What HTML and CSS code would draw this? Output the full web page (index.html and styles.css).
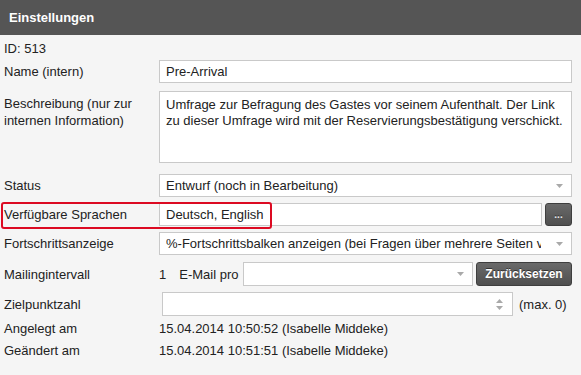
FILE: index.html
```html
<!DOCTYPE html>
<html lang="de">
<head>
    <meta charset="UTF-8">
    <meta name="viewport" content="width=device-width, initial-scale=1.0">
    <title>Einstellungen</title>
    <link rel="stylesheet" href="styles.css">
</head>
<body>

    <!-- Einstellungen Panel -->
    <div class="panel">
        <div class="panel-head">Einstellungen</div>

        <div class="panel-body">
            <div class="row row-id">ID: 513</div>

            <div class="row row-name">
                <label class="lbl">Name (intern)</label>
                <div class="fld">
                    <input class="txt" type="text" value="Pre-Arrival">
                </div>
            </div>

            <div class="row row-desc">
                <label class="lbl lbl-top">Beschreibung (nur zur internen Information)</label>
                <div class="fld">
                    <textarea class="area" readonly>Umfrage zur Befragung des Gastes vor seinem Aufenthalt. Der Link zu dieser Umfrage wird mit der Reservierungsbestätigung verschickt.</textarea>
                </div>
            </div>

            <div class="row row-status">
                <label class="lbl">Status</label>
                <div class="fld">
                    <div class="select">
                        <span class="select-val">Entwurf (noch in Bearbeitung)</span>
                        <svg class="caret" width="7" height="4" viewBox="0 0 7 4"><path d="M0 0H7L3.5 4Z"/></svg>
                    </div>
                </div>
            </div>

            <div class="row row-lang">
                <label class="lbl">Verfügbare Sprachen</label>
                <div class="fld fld-inline">
                    <input class="txt" type="text" value="Deutsch, English" readonly>
                    <button class="btn btn-more" type="button">...</button>
                </div>
                <!-- Markierung -->
                <span class="mark"></span>
            </div>

            <div class="row row-progress">
                <label class="lbl">Fortschrittsanzeige</label>
                <div class="fld">
                    <div class="select">
                        <span class="select-val">%-Fortschrittsbalken anzeigen (bei Fragen über mehrere Seiten verteilt)</span>
                        <svg class="caret" width="7" height="4" viewBox="0 0 7 4"><path d="M0 0H7L3.5 4Z"/></svg>
                    </div>
                </div>
            </div>

            <div class="row row-mail">
                <label class="lbl">Mailingintervall</label>
                <div class="fld fld-inline">
                    <span class="num">1</span>
                    <span class="unit">E-Mail pro</span>
                    <div class="select select-mail">
                        <span class="select-val"></span>
                        <svg class="caret" width="7" height="4" viewBox="0 0 7 4"><path d="M0 0H7L3.5 4Z"/></svg>
                    </div>
                    <button class="btn btn-reset" type="button">Zurücksetzen</button>
                </div>
            </div>

            <div class="row row-goal">
                <label class="lbl">Zielpunktzahl</label>
                <div class="fld fld-inline">
                    <div class="number">
                        <span class="number-val"></span>
                        <svg class="spin" width="7" height="11" viewBox="0 0 7 11"><path d="M0 4H7L3.5 0Z"/><path d="M0 7H7L3.5 11Z"/></svg>
                    </div>
                    <span class="hint">(max. 0)</span>
                </div>
            </div>

            <div class="row row-date">
                <span class="lbl">Angelegt am</span>
                <span class="val">15.04.2014 10:50:52 (Isabelle Middeke)</span>
            </div>

            <div class="row row-date row-date2">
                <span class="lbl">Geändert am</span>
                <span class="val">15.04.2014 10:51:51 (Isabelle Middeke)</span>
            </div>
        </div>
    </div>

</body>
</html>
```

FILE: styles.css
```css
/* Grundlayout */
body {
    margin: 0;
    background-color: #f5f5f5;
    font-family: "Liberation Sans", Arial, sans-serif;
    font-size: 13px;
    color: #222;
}

/* Panel Kopf */
.panel-head {
    height: 35px;
    line-height: 35px;
    padding-left: 9px;
    background-color: #555;
    color: #fff;
    font-weight: bold;
    font-size: 13px;
}

.panel-body {
    display: flex;
    flex-direction: column;
    padding: 0 9px 0 4px;
}

/* Zeilen */
.row {
    position: relative;
    display: grid;
    grid-template-columns: 155px minmax(0, 1fr);
    align-items: center;
    margin-top: 6px;
}

.row-id {
    display: block;
    margin-top: 5px;
    height: 17px;
    line-height: 17px;
}

.row-name { margin-top: 3px; }
.row-desc { margin-top: 8px; align-items: start; }
.row-status { margin-top: 11px; }
.row-mail { margin-top: 7px; }
.row-goal { margin-top: 6px; }
.row-date { margin-top: 4px; height: 18px; line-height: 18px; }

.lbl {
    line-height: 17px;
}

.lbl-top {
    padding-top: 4px;
    padding-right: 20px;
}

.row-date .lbl { line-height: 18px; }

.fld {
    min-width: 0;
}

.fld-inline {
    display: flex;
    align-items: center;
}

/* Eingabefelder */
.txt {
    box-sizing: border-box;
    width: 100%;
    height: 23px;
    margin: 0;
    padding: 0 6px;
    border: 1px solid #c9c9c9;
    background-color: #fff;
    font-family: inherit;
    font-size: 13px;
    color: #222;
    outline: none;
}

.fld-inline .txt {
    flex: 1;
    width: auto;
    min-width: 0;
}

.area {
    box-sizing: border-box;
    display: block;
    width: 100%;
    height: 72px;
    margin: 0;
    padding: 5px 6px;
    border: 1px solid #c9c9c9;
    background-color: #fff;
    font-family: inherit;
    font-size: 13px;
    line-height: 16px;
    color: #222;
    resize: none;
    overflow: hidden;
    outline: none;
}

/* Auswahlfelder */
.select {
    box-sizing: border-box;
    display: flex;
    align-items: center;
    height: 23px;
    padding: 0 8px 0 6px;
    border: 1px solid #c9c9c9;
    background-color: #fff;
}

.select-val {
    flex: 1;
    min-width: 0;
    overflow: hidden;
    white-space: nowrap;
    margin-right: 15px;
}

.caret,
.spin {
    flex-shrink: 0;
    fill: #a9a9a9;
}

.select-mail {
    flex: 1;
    height: 24px;
}

.num { margin-right: 13px; }
.unit { margin-right: 5px; }

/* Zahl */
.number {
    box-sizing: border-box;
    display: flex;
    align-items: center;
    width: 351px;
    height: 24px;
    margin-left: 3px;
    padding: 0 9px 0 6px;
    border: 1px solid #c9c9c9;
    background-color: #fff;
}

.number-val { flex: 1; }

.hint { margin-left: 6px; }

/* Buttons */
.btn {
    box-sizing: border-box;
    flex-shrink: 0;
    margin: 0 0 0 3px;
    border: 1px solid #3e3e3e;
    border-radius: 3px;
    background: linear-gradient(#6a6a6a, #4f4f4f);
    color: #fff;
    font-family: inherit;
    font-weight: bold;
    text-shadow: 0 -1px 0 #333;
    cursor: pointer;
}

.btn-more {
    width: 27px;
    height: 23px;
    padding: 0;
    font-size: 10px;
    color: #e8e8e8;
}

.btn-reset {
    width: 96px;
    height: 24px;
    padding: 0;
    font-size: 12px;
}

/* Rote Markierung */
.mark {
    position: absolute;
    left: -3px;
    top: -1px;
    box-sizing: border-box;
    width: 271px;
    height: 27px;
    border: 2px solid #dc0a22;
    border-radius: 3px;
    pointer-events: none;
}
```
